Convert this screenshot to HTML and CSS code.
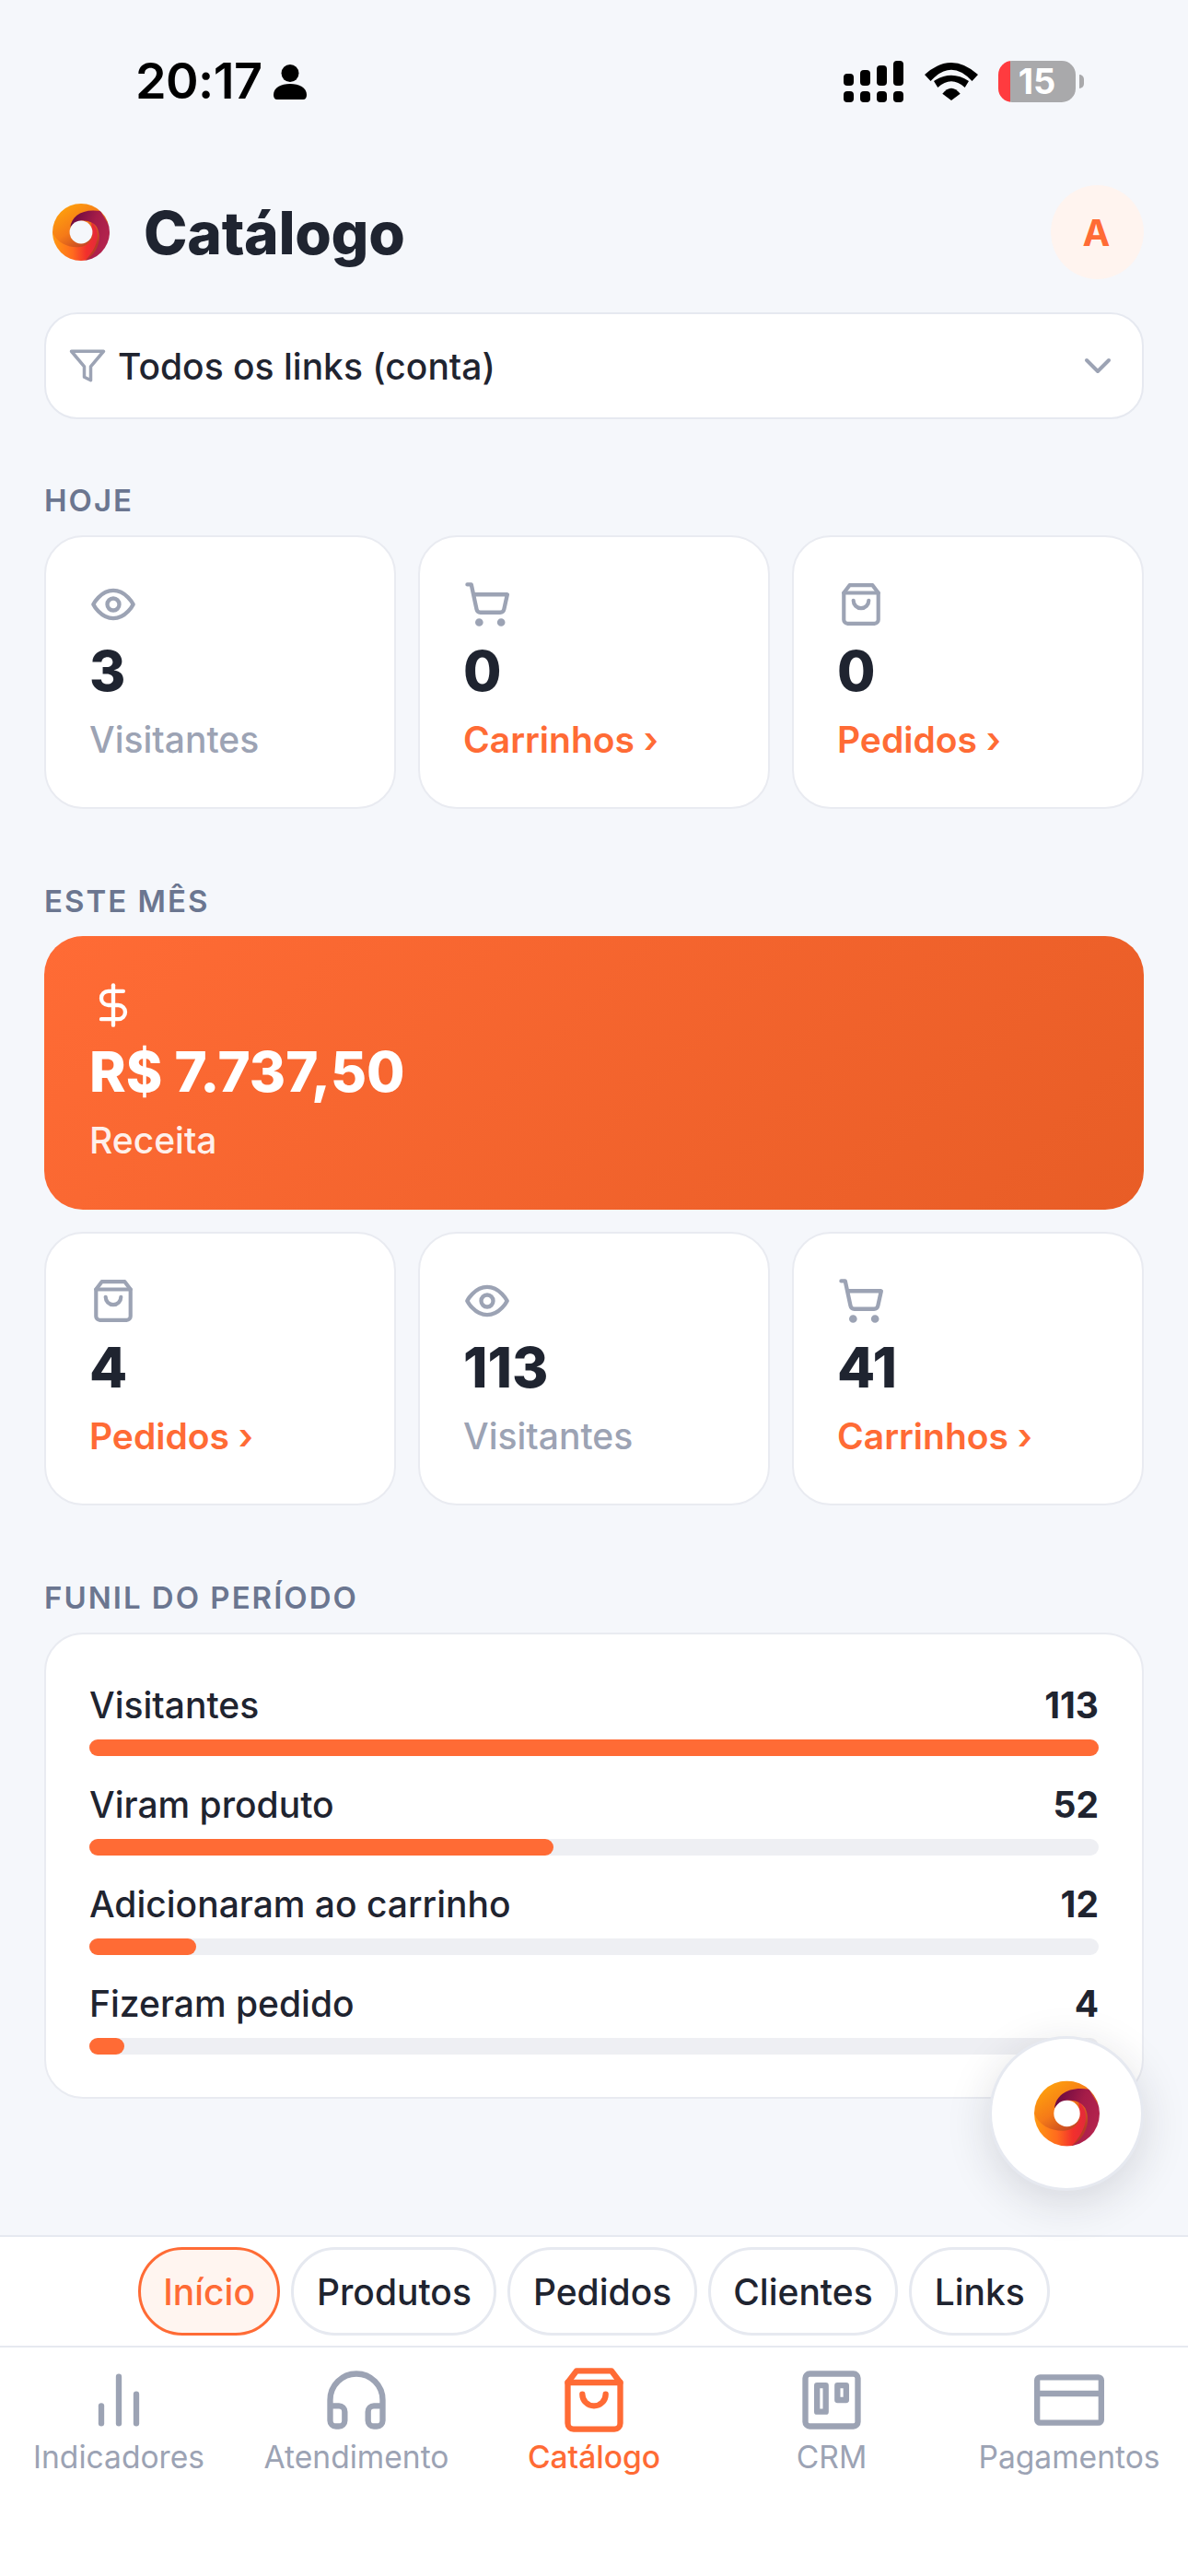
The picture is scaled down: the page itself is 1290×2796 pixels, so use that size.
FILE: index.html
```html
<!DOCTYPE html>
<html lang="pt-BR">
<head>
  <meta charset="UTF-8">
  <meta name="viewport" content="width=device-width, initial-scale=1.0">
  <title>Catálogo</title>
  <link rel="stylesheet" href="styles.css">
</head>
<body>
  <!-- Shared logo and icons -->
  <svg class="sprite" aria-hidden="true">
    <defs>
      <linearGradient id="logoShade" x1="0.15" y1="0.05" x2="0.65" y2="0.8">
        <stop offset="0" stop-color="#ffa20c"/>
        <stop offset="0.5" stop-color="#f57a18"/>
        <stop offset="1" stop-color="#b83a26"/>
      </linearGradient>
      <linearGradient id="logoBand" x1="0" y1="0" x2="1" y2="0">
        <stop offset="0" stop-color="#ff9a12"/>
        <stop offset="0.45" stop-color="#ff6a1e"/>
        <stop offset="0.75" stop-color="#f2302c"/>
        <stop offset="1" stop-color="#e32a3a"/>
      </linearGradient>
      <linearGradient id="logoDark" x1="0" y1="0.1" x2="1" y2="0.6">
        <stop offset="0" stop-color="#650840"/>
        <stop offset="0.55" stop-color="#a51c48"/>
        <stop offset="1" stop-color="#b5244e"/>
      </linearGradient>
      <mask id="logoMask">
        <circle cx="50" cy="50" r="50" fill="#fff"/>
        <circle cx="50" cy="50" r="20" fill="#000"/>
      </mask>
    </defs>
    <symbol id="logo" viewBox="0 0 100 100">
      <g mask="url(#logoMask)">
        <rect width="100" height="100" fill="url(#logoShade)"/>
        <path d="M0 50C8 70 30 78 48 76C58 75 66 68 70 58L68 32C84 44 84 72 57 100L0 100Z" fill="url(#logoBand)"/>
        <path d="M31 42C33 22 52 8 84 13L100 40L100 80L80 96L57 100C78 88 88 62 78 42C70 28 44 24 31 42Z" fill="url(#logoDark)"/>
      </g>
    </symbol>
    <symbol id="eye" viewBox="0 0 24 24"><path d="M2 12s3.500-7 10-7 10 7 10 7-3.500 7-10 7-10-7-10-7Z"/><circle cx="12" cy="12" r="3"/></symbol>
    <symbol id="cart" viewBox="0 0 24 24"><circle cx="8" cy="21" r="1"/><circle cx="19" cy="21" r="1"/><path d="M2.050 2.050h2l2.660 12.420a2 2 0 0 0 2 1.580h9.780a2 2 0 0 0 1.950-1.570l1.650-7.430H5.120"/></symbol>
    <symbol id="bag" viewBox="-0.500 -0.500 25 25"><path d="M6 2 3 6v14a2 2 0 0 0 2 2h14a2 2 0 0 0 2-2V6l-3-4Z"/><path d="M3 6h18"/><path d="M16 10a4 4 0 0 1-8 0"/></symbol>
  </svg>

  <div class="status-bar">
    <div class="status-left">
      <span class="status-time">20:17</span>
      <svg class="status-person" viewBox="0 0 36 38"><circle cx="18" cy="9.500" r="9.500"/><path d="M0 33C0 25 8 21 18 21S36 25 36 33Q36 38 32 38H4Q0 38 0 33Z"/></svg>
    </div>
    <div class="status-right">
      <svg class="status-signal" viewBox="0 0 65 45">
        <rect x="0" y="14" width="11" height="13" rx="4"/><rect x="18" y="10" width="11" height="17" rx="4"/><rect x="36" y="5" width="11" height="22" rx="4"/><rect x="54" y="0" width="11" height="27" rx="4"/>
        <rect x="0" y="33" width="11" height="12" rx="4"/><rect x="18" y="33" width="11" height="12" rx="4"/><rect x="36" y="33" width="11" height="12" rx="4"/><rect x="54" y="33" width="11" height="12" rx="4"/>
      </svg>
      <svg class="status-wifi" viewBox="0 0 58 41">
        <path d="M0 13Q29 -13 58 13L51.500 20Q29 -4.600 6.500 20Z"/>
        <path d="M10 20Q29 7.400 48 20L43.700 27Q29 13.600 14.300 27Z"/>
        <path d="M19.300 33.700Q29 21.700 38.700 33.700L29 41Z"/>
      </svg>
      <div class="battery">15</div>
      <div class="battery-nub"></div>
    </div>
  </div>

  <main class="content">
    <header class="page-header">
      <div class="page-title">
        <svg class="logo-small"><use href="#logo"/></svg>
        <h1>Catálogo</h1>
      </div>
      <div class="avatar">A</div>
    </header>

    <div class="link-select">
      <svg class="icon filter-icon" viewBox="0 0 24 24"><polygon points="22 3 2 3 10 12.460 10 19 14 21 14 12.460 22 3"/></svg>
      <span class="link-select-text">Todos os links (conta)</span>
      <svg class="icon chevron-icon" viewBox="0 0 24 24"><path d="m6 9 6 6 6-6"/></svg>
    </div>

    <section class="section section-first">
      <h2 class="section-label">HOJE</h2>
      <div class="stat-grid">
        <div class="stat-card">
          <svg class="icon stat-icon"><use href="#eye"/></svg>
          <div class="stat-value">3</div>
          <div class="stat-label">Visitantes</div>
        </div>
        <div class="stat-card">
          <svg class="icon stat-icon"><use href="#cart"/></svg>
          <div class="stat-value">0</div>
          <div class="stat-label stat-link">Carrinhos ›</div>
        </div>
        <div class="stat-card">
          <svg class="icon stat-icon"><use href="#bag"/></svg>
          <div class="stat-value">0</div>
          <div class="stat-label stat-link">Pedidos ›</div>
        </div>
      </div>
    </section>

    <section class="section">
      <h2 class="section-label">ESTE MÊS</h2>
      <div class="revenue-card">
        <svg class="icon stat-icon revenue-icon" viewBox="0 0 24 24"><line x1="12" x2="12" y1="2" y2="22"/><path d="M17 5H9.500a3.500 3.500 0 0 0 0 7h5a3.500 3.500 0 0 1 0 7H6"/></svg>
        <div class="stat-value">R$ 7.737,50</div>
        <div class="stat-label">Receita</div>
      </div>
      <div class="stat-grid">
        <div class="stat-card">
          <svg class="icon stat-icon"><use href="#bag"/></svg>
          <div class="stat-value">4</div>
          <div class="stat-label stat-link">Pedidos ›</div>
        </div>
        <div class="stat-card">
          <svg class="icon stat-icon"><use href="#eye"/></svg>
          <div class="stat-value">113</div>
          <div class="stat-label">Visitantes</div>
        </div>
        <div class="stat-card">
          <svg class="icon stat-icon"><use href="#cart"/></svg>
          <div class="stat-value">41</div>
          <div class="stat-label stat-link">Carrinhos ›</div>
        </div>
      </div>
    </section>

    <section class="section">
      <h2 class="section-label">FUNIL DO PERÍODO</h2>
      <div class="funnel-card">
        <div class="funnel-row">
          <div class="funnel-head"><span>Visitantes</span><strong>113</strong></div>
          <div class="funnel-track"><div class="funnel-bar" style="width: 100%"></div></div>
        </div>
        <div class="funnel-row">
          <div class="funnel-head"><span>Viram produto</span><strong>52</strong></div>
          <div class="funnel-track"><div class="funnel-bar" style="width: 46%"></div></div>
        </div>
        <div class="funnel-row">
          <div class="funnel-head"><span>Adicionaram ao carrinho</span><strong>12</strong></div>
          <div class="funnel-track"><div class="funnel-bar" style="width: 10.6%"></div></div>
        </div>
        <div class="funnel-row">
          <div class="funnel-head"><span>Fizeram pedido</span><strong>4</strong></div>
          <div class="funnel-track"><div class="funnel-bar" style="width: 3.5%"></div></div>
        </div>
      </div>
    </section>
  </main>

  <button class="fab"><svg class="logo-fab"><use href="#logo"/></svg></button>

  <div class="sub-tabs">
    <span class="pill pill-active">Início</span>
    <span class="pill">Produtos</span>
    <span class="pill">Pedidos</span>
    <span class="pill">Clientes</span>
    <span class="pill">Links</span>
  </div>

  <nav class="bottom-nav">
    <div class="nav-item">
      <svg class="icon nav-icon" viewBox="0 0 24 24"><path d="M18 20V10"/><path d="M12 20V4"/><path d="M6 20v-6"/></svg>
      <span>Indicadores</span>
    </div>
    <div class="nav-item">
      <svg class="icon nav-icon" viewBox="0 0 24 24"><path d="M3 14h3a2 2 0 0 1 2 2v3a2 2 0 0 1-2 2H5a2 2 0 0 1-2-2v-7a9 9 0 0 1 18 0v7a2 2 0 0 1-2 2h-1a2 2 0 0 1-2-2v-3a2 2 0 0 1 2-2h3"/></svg>
      <span>Atendimento</span>
    </div>
    <div class="nav-item nav-item-active">
      <svg class="icon nav-icon" viewBox="0 0 24 24"><path d="M6 2 3 6v14a2 2 0 0 0 2 2h14a2 2 0 0 0 2-2V6l-3-4Z"/><path d="M3 6h18"/><path d="M16 10a4 4 0 0 1-8 0"/></svg>
      <span>Catálogo</span>
    </div>
    <div class="nav-item">
      <svg class="icon nav-icon" viewBox="0 0 24 24"><rect x="3" y="3" width="18" height="18" rx="1.500"/><rect x="7" y="7" width="3" height="9"/><rect x="14" y="7" width="3" height="5"/></svg>
      <span>CRM</span>
    </div>
    <div class="nav-item">
      <svg class="icon nav-icon" viewBox="0 0 24 24"><rect x="1" y="4.200" width="22" height="15.600" rx="1"/><line x1="1" x2="23" y1="9.800" y2="9.800"/></svg>
      <span>Pagamentos</span>
    </div>
  </nav>
</body>
</html>
```

FILE: styles.css
```css
* {
  box-sizing: border-box;
}

body {
  margin: 0;
  min-height: 100vh;
  display: flex;
  flex-direction: column;
  background-color: #f5f7fb;
  color: #1f2430;
  font-family: "Inter", "Liberation Sans", sans-serif;
  overflow: hidden;
}

.sprite {
  position: absolute;
  width: 0;
  height: 0;
}

.icon {
  fill: none;
  stroke: #9ca3b4;
  stroke-width: 2;
  stroke-linecap: round;
  stroke-linejoin: round;
  flex-shrink: 0;
}

/* Status bar */
.status-bar {
  display: flex;
  justify-content: space-between;
  align-items: center;
  height: 56px;
  margin-top: 60px;
  padding: 0 113px 0 147px;
  color: #000;
}

.status-left {
  display: flex;
  align-items: center;
  gap: 13px;
}

.status-time {
  font-size: 54px;
  font-weight: 600;
  line-height: 56px;
  letter-spacing: -0.6px;
}

.status-person {
  width: 36px;
  height: 38px;
  margin-top: 2px;
}

.status-right {
  display: flex;
  align-items: center;
}

.status-signal {
  width: 65px;
  height: 45px;
  margin-right: 23px;
}

.status-wifi {
  width: 58px;
  height: 41px;
  margin-right: 22px;
}

.battery {
  width: 84px;
  height: 45px;
  border-radius: 15px;
  background: linear-gradient(90deg, #ff3b3f 13px, #a9a9ab 13px);
  color: #fff;
  font-size: 38px;
  font-weight: 700;
  line-height: 45px;
  text-align: center;
}

.battery-nub {
  width: 5px;
  height: 15px;
  margin-left: 4px;
  border-radius: 0 5px 5px 0;
  background-color: #a9a9ab;
}

/* Page content */
.content {
  padding: 0 48px;
}

.page-header {
  display: flex;
  justify-content: space-between;
  align-items: center;
  margin-top: 85px;
  height: 102px;
}

.page-title {
  display: flex;
  align-items: center;
  gap: 37px;
  padding-left: 9px;
}

.logo-small {
  width: 62px;
  height: 62px;
}

h1 {
  margin: 0;
  font-size: 64px;
  font-weight: 800;
  letter-spacing: -0.3px;
}

.avatar {
  width: 101px;
  height: 102px;
  display: flex;
  justify-content: center;
  align-items: center;
  padding-right: 2px;
  border-radius: 50%;
  background-color: #fff4ef;
  color: #ff6b35;
  font-size: 40px;
  font-weight: 700;
}

.link-select {
  display: flex;
  align-items: center;
  height: 116px;
  margin-top: 36px;
  padding: 0 24px;
  background-color: #fff;
  border: 2px solid #e6e9f0;
  border-radius: 36px;
}

.filter-icon {
  width: 42px;
  height: 42px;
}

.link-select-text {
  flex: 1;
  margin-left: 12px;
  font-size: 39px;
  font-weight: 500;
}

.chevron-icon {
  width: 48px;
  height: 48px;
}

/* Sections */
.section {
  margin-top: 80px;
}

.section-first {
  margin-top: 68px;
}

.section-label {
  margin: 0 0 18px;
  color: #6b7690;
  font-size: 33px;
  font-weight: 600;
  line-height: 40px;
  letter-spacing: 2px;
}

.stat-grid {
  display: grid;
  grid-template-columns: repeat(3, 1fr);
  gap: 24px;
}

.stat-card {
  padding: 46px 47px 49px;
  background-color: #fff;
  border: 2px solid #e9ebf1;
  border-radius: 42px;
}

.stat-icon {
  display: block;
  width: 52px;
  height: 52px;
  margin: 1px 0;
}

.stat-value {
  margin-top: 8px;
  font-size: 60px;
  font-weight: 800;
  line-height: 76px;
}

.stat-label {
  margin-top: 13px;
  color: #9ca3b4;
  font-size: 39px;
  font-weight: 500;
  line-height: 48px;
}

.stat-link {
  color: #ff6b35;
  font-weight: 600;
}

.revenue-card {
  margin-bottom: 24px;
  padding: 48px 49px 51px;
  border-radius: 42px;
  background: linear-gradient(135deg, #ff6b35, #e85d26);
  color: #fff;
}

.revenue-card .stat-label {
  color: rgba(255, 255, 255, 0.92);
}

.revenue-icon {
  stroke: #fff;
}

/* Funnel */
.funnel-card {
  padding: 46px 47px;
  background-color: #fff;
  border: 2px solid #e9ebf1;
  border-radius: 42px;
}

.funnel-row + .funnel-row {
  margin-top: 22px;
}

.funnel-head {
  display: flex;
  justify-content: space-between;
  align-items: center;
  height: 60px;
  margin-bottom: 8px;
  font-size: 39px;
  font-weight: 500;
}

.funnel-head strong {
  font-weight: 700;
}

.funnel-track {
  height: 18px;
  border-radius: 9px;
  background-color: #eeeff3;
}

.funnel-bar {
  height: 100%;
  border-radius: 9px;
  background-color: #ff6b35;
}

/* Floating button */
.fab {
  position: fixed;
  right: 48px;
  bottom: 418px;
  width: 168px;
  height: 168px;
  display: flex;
  justify-content: center;
  align-items: center;
  padding: 0;
  background-color: #fff;
  border: 3px solid #e6e9f0;
  border-radius: 50%;
  box-shadow: 0 12px 48px rgba(31, 36, 48, 0.15);
}

.logo-fab {
  width: 71px;
  height: 72px;
}

/* Bottom tabs */
.sub-tabs {
  display: flex;
  justify-content: center;
  gap: 12px;
  margin-top: auto;
  padding: 11px 0;
  background-color: #fff;
  border-top: 2px solid #e6e9f0;
  border-bottom: 2px solid #e6e9f0;
}

.pill {
  display: flex;
  align-items: center;
  height: 96px;
  padding: 0 24.500px;
  background-color: #fff;
  border: 3px solid #e6e9f0;
  border-radius: 48px;
  font-size: 39px;
  font-weight: 500;
}

.pill-active {
  background-color: #fff5f0;
  border-color: #ff6b35;
  color: #ff6b35;
}

.bottom-nav {
  display: grid;
  grid-template-columns: repeat(5, 1fr);
  height: 248px;
  padding-top: 19px;
  background-color: #fff;
}

.nav-item {
  display: flex;
  flex-direction: column;
  align-items: center;
  color: #9ca3b4;
  font-size: 33.600px;
  line-height: 40px;
}

.nav-icon {
  width: 76px;
  height: 76px;
  margin-bottom: 4px;
}

.nav-item-active {
  color: #ff6b35;
  font-weight: 500;
}

.nav-item-active .nav-icon {
  stroke: #ff6b35;
}
```
